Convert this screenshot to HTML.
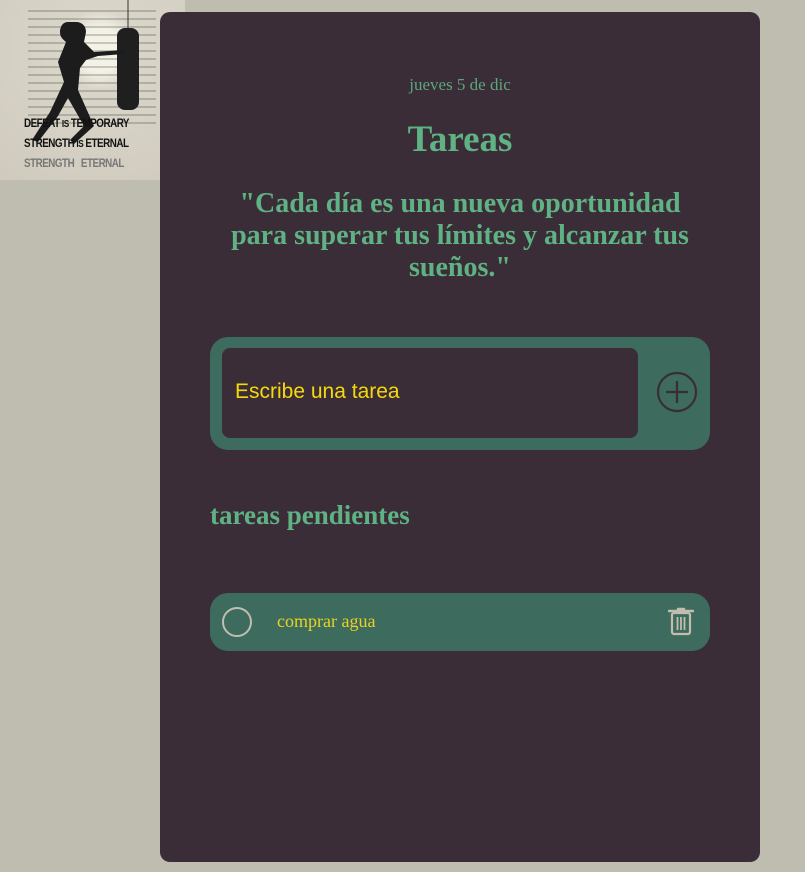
<!DOCTYPE html>
<html><head><meta charset="utf-8"><style>
html,body{margin:0;padding:0;}
body{width:805px;height:872px;background:#bebdb0;position:relative;overflow:hidden;font-family:"Liberation Serif",serif;}
.img{position:absolute;left:0;top:0;width:185px;height:180px;background:radial-gradient(circle at 100px 50px,#f4f1e6 0 22px,#d9d5c8 40px,#cfcabd 100%);overflow:hidden}
.card{position:absolute;left:160px;top:12px;width:600px;height:850px;background:#3a2d38;border-radius:10px;}
.date{position:absolute;top:63px;left:0;width:600px;text-align:center;color:#5ba67c;font-size:17px;}
h1{position:absolute;top:106px;left:0;width:600px;margin:0;text-align:center;color:#5fb283;font-size:37px;font-weight:bold;}
.quote{position:absolute;top:176px;left:20px;width:560px;text-align:center;color:#5fb283;font-size:28px;font-weight:bold;line-height:32px;white-space:nowrap;}
.form{position:absolute;left:50px;top:325px;width:500px;height:113px;background:#3d6b5d;border-radius:18px;}
.input{position:absolute;left:12px;top:11px;width:416px;height:90px;background:#3a2d38;border-radius:8px;}
.input span{position:absolute;left:13px;top:32px;color:#f5d90a;font-family:"Liberation Sans",sans-serif;font-size:21px;}
.plus{position:absolute;left:446px;top:34px;}
h2{position:absolute;top:488px;left:50px;margin:0;color:#5fb283;font-size:27px;font-weight:bold;}
.task{position:absolute;left:50px;top:581px;width:500px;height:58px;background:#3d6b5d;border-radius:18px;}
.task .c{position:absolute;left:12px;top:14px;width:26px;height:26px;border:2px solid #c1bdaf;border-radius:50%;}
.task span{position:absolute;left:67px;top:18px;color:#e8d320;font-size:18px;}
.task svg{position:absolute;left:458px;top:13px;}
</style></head><body>
<div class="img">
<div style="position:absolute;left:28px;top:10px;width:128px;height:120px;background:repeating-linear-gradient(180deg,rgba(60,60,60,.25) 0 2px,transparent 2px 8px)"></div>
<div style="position:absolute;left:117px;top:28px;width:22px;height:82px;background:#1f1f1f;border-radius:8px"></div>
<svg width="185" height="180" style="position:absolute;left:0;top:0"><path d="M68 22c-6 0-8 6-8 10 0 6 4 8 6 10l-8 20 6 20-14 30-18 28 6 2 20-26 10-18 16 28-14 14 4 4 20-18-16-36 2-22 6-8 12-4 26-2v-4l-30 2-10-10 2-10c0-6-4-10-10-10z" fill="#1c1c1c"/><line x1="128" y1="0" x2="128" y2="28" stroke="#333"/></svg>
<div style="position:absolute;left:24px;top:114px;width:160px;white-space:nowrap;font:bold 12px 'Liberation Sans Narrow','Liberation Sans',sans-serif;color:#111;line-height:18px;letter-spacing:-.6px;transform:scaleX(.82);transform-origin:left">DEFEAT <small>IS</small> TEMPORARY<br>STRENGTH <small>IS</small> ETERNAL<br><span style="color:#777">STRENGTH &nbsp; ETERNAL</span></div>
</div>
<div class="card">
<div class="date">jueves 5 de dic</div>
<h1>Tareas</h1>
<div class="quote">"Cada día es una nueva oportunidad<br>para superar tus límites y alcanzar tus<br>sueños."</div>
<div class="form"><div class="input"><span>Escribe una tarea</span></div>
<svg class="plus" width="42" height="42" viewBox="0 0 42 42"><circle cx="21" cy="21" r="19" fill="none" stroke="#3a2d38" stroke-width="2.2"/><path d="M21 10v22M10 21h22" stroke="#3a2d38" stroke-width="2.2"/></svg></div>
<h2>tareas pendientes</h2>
<div class="task"><div class="c"></div><span>comprar agua</span>
<svg width="26" height="30" viewBox="0 0 26 30"><path d="M1 5h24M10 3h6" stroke="#c1bdaf" stroke-width="2.5" stroke-linecap="round"/><rect x="4" y="7" width="18" height="21" rx="2" fill="none" stroke="#c1bdaf" stroke-width="2.2"/><path d="M9.5 11v13M13 11v13M16.5 11v13" stroke="#c1bdaf" stroke-width="1.8"/></svg></div>
</div>
</body></html>
